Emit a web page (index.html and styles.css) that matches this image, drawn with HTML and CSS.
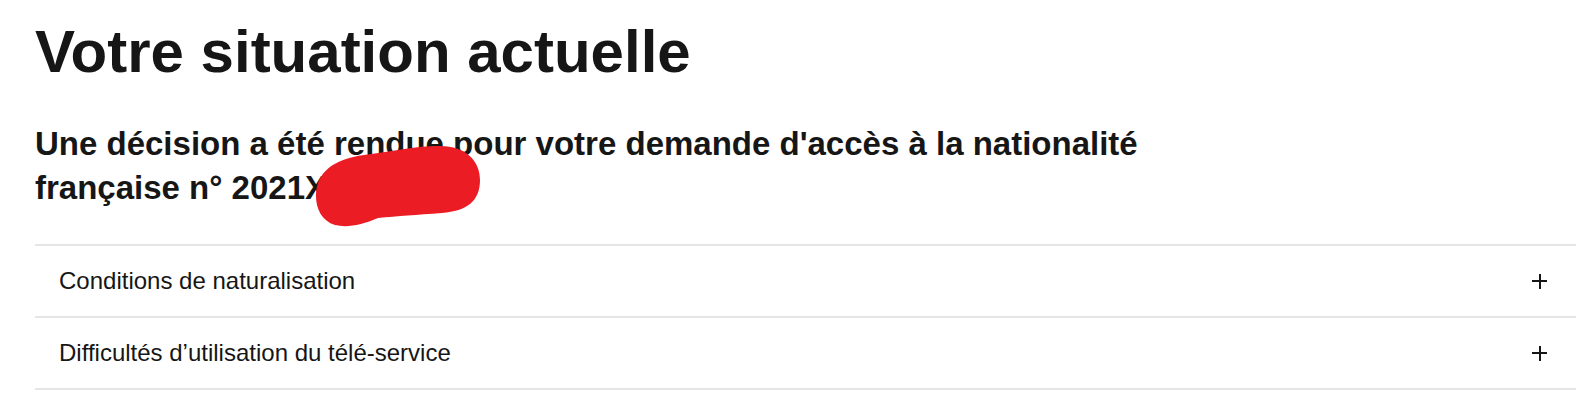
FILE: index.html
```html
<!DOCTYPE html>
<html lang="fr">
<head>
<meta charset="utf-8">
<title>Votre situation actuelle</title>
<link rel="stylesheet" href="styles.css">
</head>
<body>
<main class="page">
  <h1 class="title">Votre situation actuelle</h1>
  <h2 class="subtitle">Une décision a été rendue pour votre demande d'accès à la nationalité française n° 2021X000000
    <svg class="redact" viewBox="0 0 165 82" width="165" height="82" aria-hidden="true">
      <path fill="#ec1c24" d="M0 50 C0 26 18 13 48 9 C78 5 100 0 124 0 C150 0 164 15 164 34 C164 55 151 65 126 67 C100 69 82 70 62 72 C46 79 31 82 19 79 C6 75 0 63 0 50 Z"/>
    </svg>
  </h2>
  <div class="accordion">
    <div class="acc-item">
      <span class="acc-label">Conditions de naturalisation</span>
      <span class="plus" aria-hidden="true"></span>
    </div>
    <div class="acc-item">
      <span class="acc-label">Difficultés d’utilisation du télé-service</span>
      <span class="plus" aria-hidden="true"></span>
    </div>
  </div>
</main>
</body>
</html>
```
FILE: styles.css
```css
html, body {
  margin: 0;
  padding: 0;
  background: #ffffff;
}
body {
  font-family: "Liberation Sans", Arial, sans-serif;
  color: #161616;
}
.page {
  padding: 16px 14px 0 35px;
}
.title {
  margin: 0;
  font-size: 60px;
  line-height: 72px;
  font-weight: 700;
}
.subtitle {
  position: relative;
  margin: 34px 0 34px;
  max-width: 1160px;
  font-size: 33px;
  line-height: 44px;
  font-weight: 700;
}
.redact {
  position: absolute;
  left: 281px;
  top: 24px;
}
.accordion {
  border-top: 2px solid #e5e5e5;
}
.acc-item {
  display: flex;
  align-items: center;
  justify-content: space-between;
  height: 70px;
  padding: 0 29px 0 24px;
  border-bottom: 2px solid #e5e5e5;
  font-size: 24px;
}
.plus {
  position: relative;
  width: 15px;
  height: 15px;
}
.plus::before,
.plus::after {
  content: "";
  position: absolute;
  background: #161616;
}
.plus::before {
  left: 0;
  right: 0;
  top: 6.5px;
  height: 2px;
}
.plus::after {
  top: 0;
  bottom: 0;
  left: 6.5px;
  width: 2px;
}
```
